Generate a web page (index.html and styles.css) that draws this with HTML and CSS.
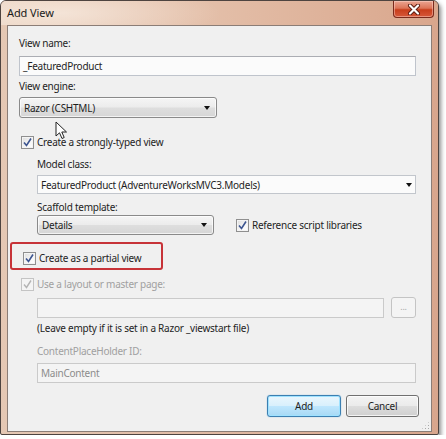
FILE: index.html
```html
<!DOCTYPE html>
<html>
<head>
<meta charset="utf-8">
<link rel="stylesheet" href="styles.css">
</head>
<body>
<div class="window">
  <div class="titlebar">
    <span class="title">Add View</span>
    <div class="close">
      <svg width="16" height="11" viewBox="0 0 16 11"><path d="M4 1.5 L12 9.5 M12 1.5 L4 9.5" stroke="#5a1a10" stroke-width="4" stroke-linecap="round"/><path d="M4 1.5 L12 9.5 M12 1.5 L4 9.5" stroke="#ffffff" stroke-width="2.2" stroke-linecap="round"/></svg>
    </div>
  </div>
  <div class="client">
    <div class="label first">View name:</div>
    <div class="textbox wide">_FeaturedProduct</div>
    <div class="label">View engine:</div>
    <div class="select engine"><span>Razor (CSHTML)</span><span class="arrow"></span></div>
    <div class="check strong"><span class="box"><svg width="11" height="11" viewBox="0 0 11 11"><path d="M2 5.5 L4.5 8.5 L9 1.5" fill="none" stroke="#3d5590" stroke-width="1.6"/></svg></span><span>Create a strongly-typed view</span></div>
    <div class="indent">
      <div class="label model">Model class:</div>
      <div class="combo"><span>FeaturedProduct (AdventureWorksMVC3.Models)</span><span class="arrow"></span></div>
      <div class="label scaffold">Scaffold template:</div>
      <div class="row">
        <div class="select details"><span>Details</span><span class="arrow"></span></div>
        <div class="check ref"><span class="box"><svg width="11" height="11" viewBox="0 0 11 11"><path d="M2 5.5 L4.5 8.5 L9 1.5" fill="none" stroke="#3d5590" stroke-width="1.6"/></svg></span><span>Reference script libraries</span></div>
      </div>
    </div>
    <div class="highlight">
      <div class="check"><span class="box"><svg width="11" height="11" viewBox="0 0 11 11"><path d="M2 5.5 L4.5 8.5 L9 1.5" fill="none" stroke="#3d5590" stroke-width="1.6"/></svg></span><span>Create as a partial view</span></div>
    </div>
    <div class="check disabled layoutcheck"><span class="box"><svg width="11" height="11" viewBox="0 0 11 11"><path d="M2 5.5 L4.5 8.5 L9 1.5" fill="none" stroke="#b4b4b4" stroke-width="1.4"/></svg></span><span>Use a layout or master page:</span></div>
    <div class="indent">
      <div class="row layoutrow">
        <div class="textbox disabledbox layout"></div>
        <div class="browse">...</div>
      </div>
      <div class="note">(Leave empty if it is set in a Razor _viewstart file)</div>
      <div class="label disabledtext cph">ContentPlaceHolder ID:</div>
      <div class="textbox disabledbox main">MainContent</div>
    </div>
    <div class="buttons">
      <div class="btn default">Add</div>
      <div class="btn">Cancel</div>
    </div>
    <div class="grip"></div>
  </div>
  <svg class="cursor" width="13" height="20" viewBox="0 0 13 20"><path d="M1 1 L1 15 L4.5 11.8 L7 17.5 L9.2 16.5 L6.8 11 L11.5 11 Z" fill="#ffffff" stroke="#222" stroke-width="1" stroke-linejoin="round"/></svg>
</div>
</body>
</html>
```

FILE: styles.css
```css
* { box-sizing: border-box; }
html, body { margin: 0; padding: 0; background: #ffffff; }
body {
  font-family: "Noto Sans", "Open Sans", sans-serif;
  font-size: 10px;
  letter-spacing: -0.25px;
  color: #1e1e1e;
}
.window {
  position: relative;
  width: 439px;
  height: 435px;
  border: 1px solid #4e4440;
  border-radius: 6px 6px 2px 2px;
  background: linear-gradient(to right, #e5c8b4 0%, #e0b9a3 50%, #d8a68d 100%);
  box-shadow: 2px 3px 4px rgba(0,0,0,0.45);
  display: flex;
  flex-direction: column;
}
.titlebar {
  height: 24px;
  display: flex;
  align-items: flex-start;
  padding-left: 6px;
  border-radius: 5px 5px 0 0;
  background:
    radial-gradient(ellipse 160px 30px at 60px 12px, rgba(255,250,244,0.5), rgba(255,250,244,0) 100%),
    linear-gradient(to right, #ebd3c1 0%, #e4c0aa 45%, #d9a68c 100%);
}
.title {
  margin-top: 5px;
  font-size: 11px;
  letter-spacing: -0.1px;
  line-height: 14px;
  color: #1a1a1a;
}
.close {
  margin-left: auto;
  margin-right: 4px;
  width: 41px;
  height: 17px;
  border: 1px solid #7a2a1c;
  border-top: none;
  border-radius: 0 0 4px 4px;
  background: linear-gradient(to bottom, #eba592 0%, #dc7458 45%, #c83e1c 55%, #d6583a 100%);
  box-shadow: inset 0 0 0 1px rgba(255,220,210,0.45);
  display: flex;
  align-items: center;
  justify-content: center;
}
.client {
  position: relative;
  margin: 0 6px;
  height: 407px;
  border: 1px solid #8b7d76;
  background: #f0f0f0;
  padding: 0 12px 0 11px;
  display: flex;
  flex-direction: column;
  align-items: flex-start;
}
.label { line-height: 14px; height: 14px; margin-top: 3px; }
.label.first { margin-top: 10px; }
.textbox {
  height: 20px;
  border: 1px solid #bfc4cc;
  border-top-color: #abadb3;
  background: #fbfbfb;
  padding: 0 3px;
  line-height: 18px;
  margin-top: 6px;
  white-space: nowrap;
}
.textbox.wide { width: 397px; }
.select {
  height: 21px;
  border: 1px solid #8a8a8a;
  border-radius: 3px;
  background: linear-gradient(to bottom, #f5f5f5 0%, #ececec 48%, #dedede 52%, #d6d6d6 100%);
  box-shadow: inset 0 0 0 1px rgba(255,255,255,0.7);
  display: flex;
  align-items: center;
  justify-content: space-between;
  padding: 0 6px 0 4px;
}
.select.engine { width: 198px; margin-top: 4px; }
.arrow {
  width: 0; height: 0;
  border-left: 3.5px solid transparent;
  border-right: 3.5px solid transparent;
  border-top: 4px solid #111;
}
.check {
  display: flex;
  align-items: center;
  height: 14px;
  line-height: 14px;
  white-space: nowrap;
}
.check .box {
  width: 13px;
  height: 13px;
  margin-left: 2px;
  margin-right: 3px;
  border: 1px solid #8f8f8f;
  background: linear-gradient(135deg, #dcdcdc 0%, #f7f7f7 60%, #ffffff 100%);
  box-shadow: inset 0 0 0 1px #f4f4f4;
  display: flex;
  align-items: center;
  justify-content: center;
}
.check.strong { margin-top: 17px; }
.indent { padding-left: 18px; display: flex; flex-direction: column; align-items: flex-start; }
.label.model { margin-top: 8px; }
.combo {
  width: 379px;
  height: 19px;
  margin-top: 4px;
  border: 1px solid #c2c6cc;
  background: #fbfbfb;
  display: flex;
  align-items: center;
  justify-content: space-between;
  padding: 0 3px 0 3px;
}
.label.scaffold { margin-top: 6px; }
.row { display: flex; align-items: center; }
.select.details { width: 177px; height: 20px; margin-top: 1px; }
.check.ref { margin-left: 20px; margin-top: 1px; }
.highlight {
  margin-top: 7px;
  margin-left: -9px;
  width: 153px;
  height: 28px;
  border: 2px solid #c73338;
  border-radius: 3px;
  padding: 4px 0 0 9px;
  display: flex;
  align-items: center;
}
.check.layoutcheck { margin-top: 7px; }
.disabled { color: #a0a0a0; }
.disabled .box { border-color: #c4c4c4; background: #f4f4f4; box-shadow: none; }
.disabledtext { color: #a0a0a0; }
.disabledbox { background: #f4f4f4; border-color: #cacaca; color: #8c8c8c; }
.layoutrow { margin-top: 6px; }
.textbox.layout { width: 347px; margin-top: 0; }
.browse {
  margin-left: 7px;
  width: 25px;
  height: 21px;
  border: 1px solid #c4c4c4;
  border-radius: 3px;
  background: #f4f4f4;
  color: #a8a8a8;
  font-size: 9px;
  text-align: center;
  line-height: 18px;
}
.note { margin-top: 3px; line-height: 14px; }
.label.cph { margin-top: 9px; }
.textbox.main { width: 379px; margin-top: 5px; }
.buttons {
  align-self: flex-end;
  display: flex;
  gap: 5px;
  margin-top: 12px;
}
.btn {
  width: 73px;
  height: 22px;
  border: 1px solid #707070;
  border-radius: 3px;
  background: linear-gradient(to bottom, #f3f3f3 0%, #ebebeb 48%, #dddddd 52%, #cfcfcf 100%);
  box-shadow: inset 0 0 0 1px rgba(255,255,255,0.75);
  text-align: center;
  line-height: 20px;
}
.btn.default {
  width: 74px;
  border-color: #3c7fb1;
  background: linear-gradient(to bottom, #eaf6fd 0%, #d9f0fc 48%, #bee6fd 52%, #a7d9f5 100%);
  box-shadow: inset 0 0 0 1px #9fe2ff, 0 0 1px #48a0d8;
}
.grip {
  position: absolute;
  right: 1px;
  bottom: 1px;
  width: 9px;
  height: 9px;
  background:
    radial-gradient(circle, #a8a8a8 0.8px, transparent 1px) 0 0 / 3px 3px;
  clip-path: polygon(100% 0, 100% 100%, 0 100%);
}
.cursor {
  position: absolute;
  left: 54px;
  top: 120px;
}
```
